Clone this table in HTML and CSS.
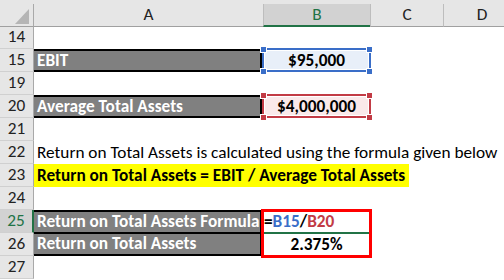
FILE: index.html
```html
<!DOCTYPE html>
<html>
<head>
<meta charset="utf-8">
<link rel="stylesheet" href="styles.css">
</head>
<body>
<div class="sheet">
  <div class="colhead">
    <div class="corner"><span class="tri"></span></div>
    <div class="ch first">A</div>
    <div class="ch sel">B</div>
    <div class="ch">C</div>
    <div class="ch">D</div>
  </div>

  <div class="row"><div class="rh">14</div></div>

  <div class="row">
    <div class="rh">15</div>
    <div class="a lbl single">EBIT</div>
    <div class="b val">
      <span class="box blue"></span>
      <span class="hd blue-h tl"></span><span class="hd blue-h tr"></span>
      <span class="hd blue-h bl"></span><span class="hd blue-h br"></span>
      <span class="v">$95,000</span>
    </div>
  </div>

  <div class="row"><div class="rh">19</div></div>

  <div class="row">
    <div class="rh">20</div>
    <div class="a lbl single">Average Total Assets</div>
    <div class="b val">
      <span class="box red"></span>
      <span class="hd red-h tl"></span><span class="hd red-h tr"></span>
      <span class="hd red-h bl"></span><span class="hd red-h br"></span>
      <span class="v">$4,000,000</span>
    </div>
  </div>

  <div class="row"><div class="rh">21</div></div>

  <div class="row">
    <div class="rh">22</div>
    <div class="span">Return on Total Assets is calculated using the formula given below</div>
  </div>

  <div class="row">
    <div class="rh">23</div>
    <div class="span"><span class="yl">Return on Total Assets = EBIT / Average Total Assets</span></div>
  </div>

  <div class="row"><div class="rh">24</div></div>

  <div class="row">
    <div class="rh sel">25</div>
    <div class="a lbl upper">Return on Total Assets Formula</div>
    <div class="b formula">
      <span class="redbox"></span>
      <span class="act"></span>
      <span class="v">=<span class="rb">B15</span>/<span class="rr">B20</span></span>
    </div>
  </div>

  <div class="row">
    <div class="rh">26</div>
    <div class="a lbl lower">Return on Total Assets</div>
    <div class="b val"><span class="v">2.375%</span></div>
  </div>

  <div class="row"><div class="rh">27</div></div>
</div>
</body>
</html>
```

FILE: styles.css
```css
* { box-sizing: border-box; }
html, body { margin: 0; padding: 0; background: #ffffff; }
body {
  width: 504px;
  height: 280px;
  overflow: hidden;
  font-family: Carlito, Calibri, "Liberation Sans Narrow", "Open Sans", sans-serif;
  font-size: 17.25px;
  color: #000;
}
.sheet { width: 520px; }

.colhead, .row {
  display: grid;
  grid-template-columns: 34px 229px 107px 73px 77px;
}

.colhead {
  height: 26px;
  padding-top: 4px;
  background: #e6e6e6;
}
.corner {
  position: relative;
  border-right: 1px solid #a9a9a9;
  border-bottom: 1px solid #a0a0a0;
}
.tri {
  position: absolute;
  right: 4px;
  bottom: 2px;
  width: 14px;
  height: 15px;
  background: #b5b5b5;
  clip-path: polygon(100% 0, 100% 100%, 0 100%);
}
.ch {
  text-align: center;
  line-height: 21px;
  color: #222;
  border-left: 1px solid #bdbdbd;
  border-bottom: 1px solid #a0a0a0;
}
.ch.first { border-left: 0; }
.ch.sel {
  background: #d2d2d2;
  color: #217346;
  border-bottom: 2px solid #217346;
}

.row { height: 23px; line-height: 23px; }
.rh {
  background: #e6e6e6;
  border-right: 1px solid #a9a9a9;
  border-bottom: 1px solid #d0d0d0;
  text-align: center;
  line-height: 22px;
  color: #222;
}
.rh.sel {
  background: #d2d2d2;
  color: #217346;
  border-right: 2px solid #217346;
}

.lbl {
  background: #808080;
  color: #fff;
  font-weight: 700;
  padding-left: 3px;
  margin-right: 1px;
  border-style: solid;
  border-color: #000;
  border-width: 2px 2px 2px 0;
  line-height: 19px;
  white-space: nowrap;
  overflow: hidden;
}
.lbl.upper { border-width: 2px 2px 1px 0; line-height: 20px; }
.lbl.lower { border-width: 1px 2px 2px 0; line-height: 20px; }

.b { position: relative; }
.val { text-align: center; font-weight: 700; }
.v { position: relative; z-index: 1; }

.box {
  position: absolute;
  left: -1px; right: -1px; top: -1px; bottom: 0;
  border: 2px solid;
  box-shadow: inset 0 0 0 1px #fff;
}
.box.blue { border-color: #3a6ec8; background: #e8eff9; }
.box.red { border-color: #c23b45; background: #fae9ea; }

.hd {
  position: absolute;
  width: 7px; height: 7px;
  border: 1px solid #fff;
  z-index: 2;
}
.blue-h { background: #3a6ec8; }
.red-h { background: #c23b45; }
.hd.tl { left: -3px; top: -3px; }
.hd.tr { right: -3px; top: -3px; }
.hd.bl { left: -3px; bottom: -3px; }
.hd.br { right: -3px; bottom: -3px; }

.span {
  grid-column: 2 / -1;
  white-space: nowrap;
  padding-left: 3px;
}
.yl {
  display: inline-block;
  background: #ffff00;
  font-weight: 700;
  margin-left: -3px;
  padding: 0 4px 0 3px;
  height: 23px;
}

.formula { font-weight: 700; padding-left: 1px; }
.rb { color: #3a6ec8; }
.rr { color: #c23b45; }
.redbox {
  position: absolute;
  top: -1px; left: -2px; right: -2px;
  height: 49px;
  border: 3px solid #ff0000;
  z-index: 3;
}
.act {
  position: absolute;
  left: 1px; right: 1px; bottom: -1px;
  height: 2px;
  background: #217346;
  z-index: 2;
}
```
